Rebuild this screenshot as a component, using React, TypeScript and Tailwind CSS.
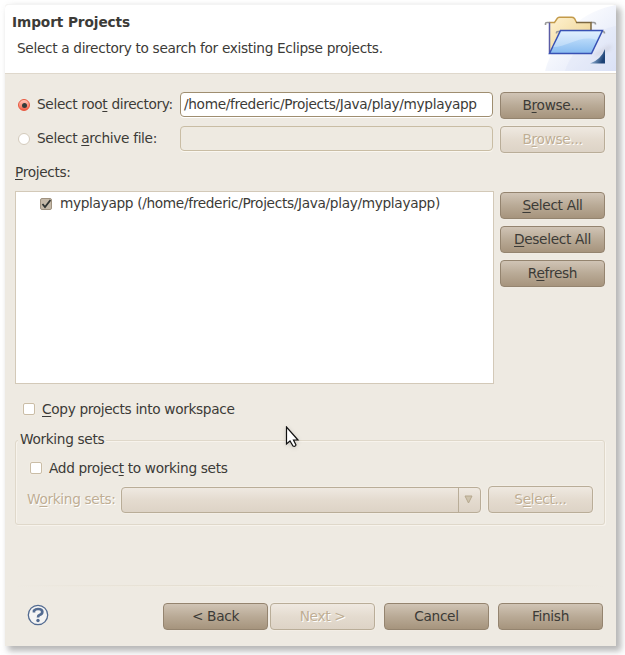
import React from 'react';

type ButtonProps = {
  children: React.ReactNode;
  disabled?: boolean;
};

function Button({ children, disabled = false }: ButtonProps) {
  return (
    <button
      type="button"
      disabled={disabled}
      className={
        disabled
          ? 'flex h-[27px] w-[105px] shrink-0 items-center justify-center rounded-[4px] border border-[#b9ad98] bg-linear-to-b from-[#efe9e1] via-[#e4dbcf] to-[#ddd3c6] pb-[2px] text-[#bfae94] shadow-[0_0_0_1px_#f3eee6] [text-shadow:1px_1px_0_#fff]'
          : 'flex h-[27px] w-[105px] shrink-0 items-center justify-center rounded-[4px] border border-[#94846f] bg-linear-to-b from-[#d0c4b5] via-[#b9aa96] to-[#a6947d] pb-[2px] shadow-[0_0_0_1px_#f0ebe3]'
      }
    >
      <span className="whitespace-pre">{children}</span>
    </button>
  );
}

function Key({ children }: { children: React.ReactNode }) {
  return <span className="underline decoration-1 underline-offset-2">{children}</span>;
}

function CheckBox() {
  return <span className="size-3 shrink-0 rounded-[2px] border border-[#cabda6] bg-white shadow-[0_0_0_1px_#f1ece3]" />;
}

function Folder() {
  return (
    <svg width="75" height="66" viewBox="0 0 75 66" className="shrink-0">
      <defs>
        <linearGradient id="banner" x1="0" y1="0" x2="1" y2="1">
          <stop offset="0.2" stopColor="#fff" />
          <stop offset="1" stopColor="#dde4f7" />
        </linearGradient>
        <linearGradient id="tan" x1="0" y1="0" x2="1" y2="1">
          <stop stopColor="#fff2d1" />
          <stop offset="1" stopColor="#eace88" />
        </linearGradient>
        <linearGradient id="blue" x1="0" y1="0" x2="0" y2="1">
          <stop stopColor="#d5eaff" />
          <stop offset="1" stopColor="#86bbf0" />
        </linearGradient>
        <linearGradient id="corner" x1="0" y1="0" x2="1" y2="0.4">
          <stop offset="0.2" stopColor="#a9c8e6" />
          <stop offset="1" stopColor="#1c4276" />
        </linearGradient>
        <filter id="soft" x="-50%" y="-50%" width="200%" height="200%">
          <feGaussianBlur stdDeviation="2" />
        </filter>
      </defs>
      <path d="M75 0C45 5 14 28 4 66h71Z" fill="url(#banner)" />
      <path d="M75 21C53 25 32 42 24 66h51Z" fill="#d3dcf5" opacity=".25" />
      <path d="M53 50 70 40v3L55 51Z" fill="#8c8088" opacity=".3" filter="url(#soft)" />
      <path d="M4.500 20v-1.500q0-1 1.500-1h3M50 17.500h3q1.500 0 1.500 2" fill="none" stroke="#999" strokeWidth="1.600" />
      <path d="M8.500 48.500v-31h5l3-4.500q1-.7 2-.7h12q2 0 3 1.200l2 4h14.500v31Z" fill="url(#tan)" />
      <path d="M8.500 17.500h5l3-4.500q1-.7 2-.7h12q2 0 3 1.200l2 4" fill="none" stroke="#c39a49" strokeWidth="1.400" />
      <path d="M35 17.500h15v9" fill="none" stroke="#7c6740" strokeWidth="1.500" />
      <path d="M8.500 17.500v31" stroke="#5a5ba5" strokeWidth="1.500" />
      <path d="M15.500 28.500v-1q0-1 1.500-1h3M60 26.500h2q1.500 0 1.500 2" fill="none" stroke="#999" strokeWidth="1.600" />
      <path d="M19.500 25.500h42L50.500 48.500H8.500Z" fill="url(#blue)" stroke="#3851b4" strokeWidth="1.500" />
      <path d="M20.500 27h39l-4 8C40 29 27 42 12 42Z" fill="#fff" opacity=".3" />
      <path d="M64 44v14.500H49q11-4 15-14.500Z" fill="url(#corner)" />
    </svg>
  );
}

export default function App() {
  return (
    <div className="h-[655px] w-[625px] overflow-hidden bg-white pt-[4px] pl-[5px] font-['DejaVu_Sans',sans-serif] text-[13.7px] leading-4 tracking-[-0.335px] text-[#3c3b37]">
      <main className="flex h-[642px] w-[611px] flex-col rounded-t-[4px] bg-[#eeeae2] shadow-[4px_4px_6px_1px_#7778]">
        <header className="flex h-[70px] shrink-0 justify-between rounded-t-[4px] border-t border-b border-t-[#f4f4f4] border-b-[#dfd8cc] bg-white pl-[7px]">
          <div className="pt-[9px] whitespace-nowrap">
            <h1 className="font-bold tracking-[-0.1px]">Import Projects</h1>
            <p className="mt-[10px] pl-[5px]">Select a directory to search for existing Eclipse projects.</p>
          </div>
          <Folder />
        </header>

        <div className="flex flex-col gap-[7px] pt-[18px] pl-[13px]">
          <div className="flex h-[27px] items-start">
            <span className="mt-[7px] flex size-[12px] items-center justify-center rounded-full border border-[#e8573e] bg-linear-to-b from-[#ffc6b9] to-[#f15e46]">
              <span className="size-[5px] rounded-full bg-[#333c3b]" />
            </span>
            <span className="mt-[4px] ml-[7px] w-[143px] whitespace-nowrap">Select roo<Key>t</Key> directory:</span>
            <div className="h-[25px] w-[313px] rounded-[4px] border border-[#9f8e70] bg-white pt-[3px] pl-[3px] whitespace-nowrap shadow-[0_1px_0_#fff]">/home/frederic/Projects/Java/play/myplayapp</div>
            <div className="ml-[7px]"><Button>B<Key>r</Key>owse...</Button></div>
          </div>
          <div className="flex h-[27px] items-start">
            <span className="mt-[7px] size-[12px] rounded-full border border-[#d4cbbc] bg-white" />
            <span className="mt-[4px] ml-[7px] w-[143px] whitespace-nowrap">Select <Key>a</Key>rchive file:</span>
            <div className="h-[25px] w-[313px] rounded-[4px] border border-[#c9bda4] bg-[#eeeae1] shadow-[0_1px_0_#faf7f0]" />
            <div className="ml-[7px]"><Button disabled>B<Key>r</Key>owse...</Button></div>
          </div>
        </div>

        <div className="mt-[11px] ml-[10px] h-[27px]"><Key>P</Key>rojects:</div>
        <div className="flex h-[193px] shrink-0 pl-[10px]">
          <div className="h-[193px] w-[479px] border border-[#d3c9b8] bg-white pt-[3px] pl-[24px]">
            <div className="flex items-center">
              <span className="mt-[2px] size-[12px] rounded-[2px] border border-[#9f9280] bg-[#c5b9a8]">
                <svg width="10" height="10" viewBox="0 0 10 10"><path d="m1.500 5 2.500 3L9.500 1" fill="none" stroke="#303432" strokeWidth="1.800" /></svg>
              </span>
              <span className="ml-[8px] whitespace-nowrap">myplayapp (/home/frederic/Projects/Java/play/myplayapp)</span>
            </div>
          </div>
          <div className="ml-[6px] flex flex-col gap-[7px] pt-[1px]">
            <Button><Key>S</Key>elect All</Button>
            <Button><Key>D</Key>eselect All</Button>
            <Button>R<Key>e</Key>fresh</Button>
          </div>
        </div>

        <label className="mt-[17px] flex items-center pl-[18px]">
          <CheckBox />
          <span className="ml-[7px]"><Key>C</Key>opy projects into workspace</span>
        </label>

        <section className="mt-[23px] ml-[10px] h-[85px] w-[590px] shrink-0 rounded-[3px] border border-[#dfd8ca] shadow-[inset_1px_1px_0_#f7f3ec,1px_1px_0_#f7f3ec]">
          <h2 className="-mt-[10px] ml-[2px] w-[88px] bg-[#eeeae2] pl-[2px] whitespace-nowrap">Working sets</h2>
          <label className="mt-[13px] flex items-center pl-[14px]">
            <CheckBox />
            <span className="ml-[7px]">Add projec<Key>t</Key> to working sets</span>
          </label>
          <div className="mt-[10px] flex items-center pl-[11px]">
            <span className="w-[94px] pb-[2px] whitespace-nowrap text-[#bfae94] [text-shadow:1px_1px_0_#fff]">W<Key>o</Key>rking sets:</span>
            <div className="flex h-[26px] w-[360px] justify-end rounded-[4px] border border-[#b9ad98] bg-linear-to-b from-[#efe9e1] via-[#e4dbcf] to-[#ddd3c6] shadow-[0_0_0_1px_#f3eee6]">
              <span className="flex w-[22px] items-center justify-center border-l border-[#b9ad98] pr-[3px]">
                <svg width="9" height="9" viewBox="0 0 9 9"><path d="M1 1h7L4.500 8Z" fill="#cec3ad" stroke="#b6a88e" /></svg>
              </span>
            </div>
            <div className="ml-[7px]"><Button disabled>S<Key>e</Key>lect...</Button></div>
          </div>
        </section>

        <div className="mt-[60px] ml-[10px] h-[2px] w-[590px] bg-linear-to-r from-transparent via-[#ded6c5] to-transparent pt-px">
          <div className="h-px bg-linear-to-r from-transparent via-[#faf7f0] to-transparent" />
        </div>
        <footer className="mt-[16px] flex h-[27px] shrink-0 pl-[22px]">
          <svg width="22" height="22" viewBox="0 0 22 22" className="mt-[1px] mr-[114px]">
            <circle cx="11" cy="11" r="9.700" fill="#f4f4f3" stroke="#536b91" strokeWidth="1.300" />
            <path d="M7 8.500V6.700Q8.500 5 11 5c6 0 5 5 1.500 6-1.500.5-1.500 1-1.500 2.500" fill="none" stroke="#536b91" strokeWidth="2.700" />
            <circle cx="11" cy="16.500" r="1.700" fill="#536b91" />
          </svg>
          <Button>&lt; Back</Button>
          <div className="ml-[2px]"><Button disabled>Next &gt;</Button></div>
          <div className="ml-[9px]"><Button>Cancel</Button></div>
          <div className="ml-[9px]"><Button>Finish</Button></div>
        </footer>
      </main>
      <svg width="17" height="23" viewBox="0 0 17 23" className="absolute top-[426px] left-[285px] drop-shadow-sm">
        <path d="M1.500 1v17l3.500-3 3 5q2 1 3-1l-2.500-5H13Z" fill="white" stroke="#111" strokeWidth="1.200" />
      </svg>
    </div>
  );
}
